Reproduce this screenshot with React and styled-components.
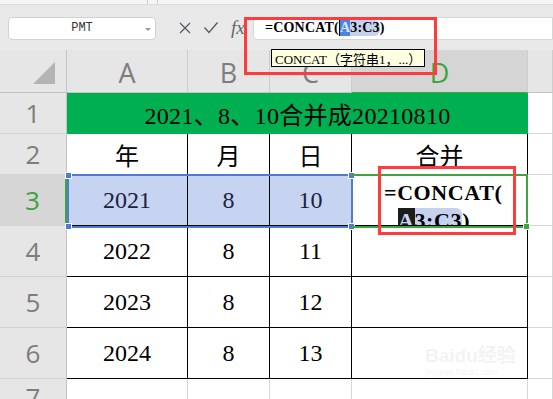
import React from 'react';
import styled, { createGlobalStyle } from 'styled-components';

const GlobalStyle = createGlobalStyle`
  html, body {
    margin: 0;
    padding: 0;
    overflow: hidden;
    background: #e9e9e9;
  }
`;

const cols = ['A', 'B', 'C', 'D', 'E'];

// sheet rows 2..6, placed on grid rows 3..7
const rows = [
  { n: '2', cells: ['年', '月', '日', '合并'] },
  { n: '3', cells: ['2021', '8', '10', ''], selected: true },
  { n: '4', cells: ['2022', '8', '11', ''] },
  { n: '5', cells: ['2023', '8', '12', ''] },
  { n: '6', cells: ['2024', '8', '13', ''] },
];

const App = () => {
  return (
    <Page>
      <GlobalStyle />
      <TopStrip>
        <StripLine />
        <StripLine />
      </TopStrip>
      <FormulaBar>
        <NameBox>
          PMT
          <Caret />
        </NameBox>
        <BarIcons>
          <svg width="14" height="14" viewBox="0 0 14 14">
            <path d="M2 2 L12 12 M12 2 L2 12" stroke="#555a66" strokeWidth="1.3" fill="none" />
          </svg>
          <svg width="16" height="14" viewBox="0 0 16 14">
            <path d="M1.5 6.5 L6 11.5 L14.5 1.5" stroke="#555a66" strokeWidth="1.3" fill="none" />
          </svg>
          <Fx>fx</Fx>
        </BarIcons>
        <FormulaInput>
          =CONCAT(<Cursor>A</Cursor><RefMark>3:C3</RefMark>)
        </FormulaInput>
      </FormulaBar>

      <Sheet>
        <Corner>
          <svg width="22" height="22" viewBox="0 0 22 22">
            <polygon points="22,0 22,22 0,22" fill="#b4b4b4" />
          </svg>
        </Corner>
        {cols.map((c, i) => (
          <ColHead key={c} $col={i + 2} $active={c === 'D'}>
            {c === 'E' ? '' : c}
          </ColHead>
        ))}

        <RowHead $row={2}>1</RowHead>
        <TitleCell>2021、8、10合并成20210810</TitleCell>
        <Cell $row={2} $col={6} $grid />

        {rows.map((r, ri) => (
          <React.Fragment key={r.n}>
            <RowHead $row={ri + 3} $active={r.selected}>{r.n}</RowHead>
            {r.cells.map((t, i) => (
              <Cell key={i} $row={ri + 3} $col={i + 2} $selected={r.selected && i < 3}>
                {r.selected && i === 3 ? (
                  <EditText>
                    <EditLine>=CONCAT(</EditLine>
                    <EditLine $indent>
                      <InvMark>A</InvMark>
                      <RefMark>3:C3</RefMark>)
                    </EditLine>
                  </EditText>
                ) : (
                  t
                )}
              </Cell>
            ))}
            <Cell $row={ri + 3} $col={6} $grid />
          </React.Fragment>
        ))}

        <RowHead $row={8}>7</RowHead>
        {cols.map((c, i) => (
          <Cell key={c} $row={8} $col={i + 2} $grid />
        ))}

        <SelectBox>
          <Handle $pos="tl" />
          <Handle $pos="bl" />
          <Handle $pos="tr" />
          <Handle $pos="br" />
        </SelectBox>
        <ActiveBox>
          <Handle $pos="br" $green />
        </ActiveBox>
      </Sheet>

      <Tooltip>CONCAT（字符串1，...）</Tooltip>
      <RedBox $x={244} $y={17} $w={193} $h={58} />
      <RedBox $x={378} $y={166} $w={138} $h={69} />
      <Watermark>
        Baidu经验
        <small>jingyan.baidu.com</small>
      </Watermark>
    </Page>
  );
};

const Page = styled.div`
  position: relative;
  width: 553px;
  height: 399px;
  overflow: hidden;
  background: #e9e9e9;
  font-family: 'Liberation Serif', 'Noto Sans CJK SC', serif;
`;

const TopStrip = styled.div`
  height: 4px;
  background: #f5f5f5;
  border-bottom: 1px solid #dcdcdc;
  display: flex;
  gap: 9px;
  padding-left: 147px;
`;

const StripLine = styled.div`
  width: 1px;
  height: 100%;
  background: #d0d0d0;
`;

const FormulaBar = styled.div`
  height: 45px;
  display: flex;
  align-items: center;
  padding: 1px 0 0 8px;
  box-sizing: border-box;
`;

const NameBox = styled.div`
  position: relative;
  width: 148px;
  height: 23px;
  box-sizing: border-box;
  background: #fff;
  border: 1px solid #d2d2d2;
  border-radius: 4px;
  display: flex;
  align-items: center;
  justify-content: center;
  font-family: 'Liberation Mono', monospace;
  font-size: 12px;
  color: #333;
`;

const Caret = styled.span`
  position: absolute;
  right: 4px;
  top: 10px;
  border-left: 3px solid transparent;
  border-right: 3px solid transparent;
  border-top: 3px solid #999;
`;

const BarIcons = styled.div`
  display: flex;
  align-items: center;
  gap: 11px;
  padding-left: 22px;
  width: 75px;
`;

const Fx = styled.span`
  font-family: 'Liberation Serif', serif;
  font-style: italic;
  font-size: 19px;
  color: #666;
  margin-left: 1px;
`;

const FormulaInput = styled.div`
  flex: 1;
  height: 23px;
  background: #fff;
  border: 1px solid #d6d6d6;
  border-radius: 4px 0 0 4px;
  box-sizing: border-box;
  display: flex;
  align-items: center;
  padding-left: 11px;
  font-family: 'Liberation Serif', serif;
  font-weight: bold;
  font-size: 14px;
  letter-spacing: 0.2px;
  color: #000;
`;

const Cursor = styled.span`
  background: #4a86e0;
  color: #d8e4fa;
  border-left: 1px solid #000;
`;

const RefMark = styled.span`
  background: #c5d1ef;
  border-radius: 0 6px 6px 0;
`;

const InvMark = styled.span`
  background: #1c1c1c;
  color: #c7d4f2;
`;

const Sheet = styled.div`
  display: grid;
  grid-template-columns: 67px 121px 82px 82px 176px 1fr;
  grid-template-rows: 43px 41px 41px 51px 51px 51px 51px 1fr;
  height: 349px;
  background: #fff;
`;

const Corner = styled.div`
  grid-row: 1;
  grid-column: 1;
  background: #e6e6e6;
  border-right: 1px solid #c4c4c4;
  border-bottom: 1px solid #c4c4c4;
  box-sizing: border-box;
  display: flex;
  align-items: flex-end;
  justify-content: flex-end;
  padding: 0 11px 8px 0;
`;

const ColHead = styled.div`
  grid-row: 1;
  grid-column: ${(p) => p.$col};
  background: ${(p) => (p.$active ? '#d5d5d5' : '#e6e6e6')};
  border-right: 1px solid #cdcdcd;
  border-bottom: 1px solid ${(p) => (p.$active ? '#3fa33f' : '#c4c4c4')};
  box-sizing: border-box;
  display: flex;
  align-items: center;
  justify-content: center;
  padding-top: 2px;
  font-family: 'Open Sans', 'Noto Sans', sans-serif;
  font-size: 27px;
  color: ${(p) => (p.$active ? '#3fa33f' : '#7d7d7d')};
`;

const RowHead = styled.div`
  grid-row: ${(p) => p.$row};
  grid-column: 1;
  background: ${(p) => (p.$active ? '#d6d6d6' : '#e6e6e6')};
  border-right: ${(p) => (p.$active ? '2px solid #3fa33f' : '1px solid #c4c4c4')};
  border-bottom: 1px solid #d3d3d3;
  box-sizing: border-box;
  display: flex;
  align-items: center;
  justify-content: center;
  font-family: 'Open Sans', 'Noto Sans', sans-serif;
  font-size: 26px;
  color: ${(p) => (p.$active ? '#3fa33f' : '#7d7d7d')};
`;

const Cell = styled.div`
  grid-row: ${(p) => p.$row};
  grid-column: ${(p) => p.$col};
  overflow: hidden;
  box-sizing: border-box;
  background: ${(p) => (p.$selected ? '#c6d4f1' : '#fff')};
  border-right: 1px solid ${(p) => (p.$grid ? '#d6d6d6' : '#000')};
  border-bottom: 1px solid ${(p) => (p.$grid ? '#d6d6d6' : '#000')};
  display: flex;
  align-items: center;
  justify-content: center;
  font-size: 24px;
  color: ${(p) => (p.$selected ? '#1c2340' : '#000')};
`;

const TitleCell = styled.div`
  grid-row: 2;
  grid-column: 2 / 6;
  background: #00b050;
  display: flex;
  align-items: center;
  justify-content: center;
  font-size: 24px;
  letter-spacing: 0.3px;
  color: #000;
`;

const EditText = styled.div`
  align-self: flex-start;
  width: 100%;
  padding: 4px 0 0 32px;
  font-weight: bold;
  font-size: 22px;
  line-height: 28px;
  letter-spacing: 0.6px;
  color: #000;
  white-space: nowrap;
`;

const EditLine = styled.div`
  padding-left: ${(p) => (p.$indent ? '14px' : '0')};
`;

const SelectBox = styled.div`
  grid-row: 4;
  grid-column: 2 / 5;
  position: relative;
  margin: -1px -1px -2px 0;
  border: 2px solid #4f7bd3;
  pointer-events: none;
`;

const ActiveBox = styled.div`
  grid-row: 4;
  grid-column: 5;
  position: relative;
  margin: -1px 0 -2px 0;
  border: 2px solid #3fa33f;
  border-left: none;
  pointer-events: none;
`;

const Handle = styled.span`
  position: absolute;
  width: 5px;
  height: 5px;
  background: ${(p) => (p.$green ? '#3fa33f' : '#4f7bd3')};
  border: 1px solid #fff;
  ${(p) => (p.$pos[0] === 't' ? 'top: -4px;' : 'bottom: -4px;')}
  ${(p) => (p.$pos[1] === 'l' ? 'left: -4px;' : 'right: -4px;')}
`;

const Tooltip = styled.div`
  position: absolute;
  left: 271px;
  top: 49px;
  height: 18px;
  box-sizing: border-box;
  padding: 0 3px;
  background: #ffffe1;
  border: 1px solid #000;
  display: flex;
  align-items: center;
  font-family: 'Liberation Serif', 'Noto Sans CJK SC', serif;
  font-size: 13px;
  color: #000;
  white-space: nowrap;
`;

const RedBox = styled.div`
  position: absolute;
  left: ${(p) => p.$x}px;
  top: ${(p) => p.$y}px;
  width: ${(p) => p.$w}px;
  height: ${(p) => p.$h}px;
  box-sizing: border-box;
  border: 3px solid #ff3b3b;
  pointer-events: none;
`;

const Watermark = styled.div`
  position: absolute;
  left: 425px;
  top: 346px;
  display: flex;
  flex-direction: column;
  font-family: 'Liberation Sans', 'Noto Sans CJK SC', sans-serif;
  font-weight: bold;
  font-size: 19px;
  line-height: 20px;
  color: rgba(235, 235, 235, 0.6);
  pointer-events: none;

  small {
    font-size: 9px;
    line-height: 12px;
    font-weight: normal;
  }
`;

export default App;
